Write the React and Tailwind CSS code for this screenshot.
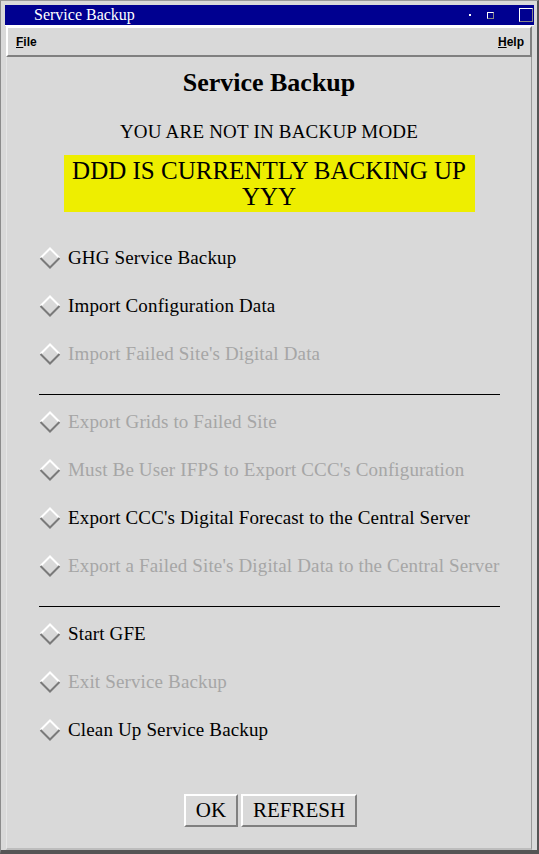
import React from "react";

function Diamond() {
  return (
    <svg width="22" height="22" viewBox="0 0 22 22" className="shrink-0">
      <polygon points="1,11 11,1 21,11 11,21" fill="#d9d9d9" />
      <polyline points="1.5,11 11,1.5 20.5,11" fill="none" stroke="#ffffff" strokeWidth="2" />
      <polyline points="1.5,11 11,20.5 20.5,11" fill="none" stroke="#7a7a7a" strokeWidth="2" />
    </svg>
  );
}

function Row({ label, disabled }) {
  return (
    <div className="h-[48px] flex items-center pl-[32px]">
      <Diamond />
      <span
        className={
          "ml-[7px] text-[19px] tracking-[0.15px] whitespace-nowrap font-['Liberation_Serif','Times_New_Roman',serif] " +
          (disabled ? "text-[#a6a6a6]" : "text-black")
        }
      >
        {label}
      </span>
    </div>
  );
}

function Sep() {
  return (
    <div className="h-[20px] pt-[16px] pl-[32px] pr-[31px]">
      <div className="h-px bg-black" />
    </div>
  );
}

export default function App() {
  return (
    <div className="w-[539px] h-[854px] box-border bg-[#d9d9d9] border-l border-t border-l-[#8c8c8c] border-t-[#9a9a9a] border-r-2 border-r-[#555] border-b-4 border-b-[#555] pt-[4px] pl-[4px] pr-[3px] flex flex-col font-['Liberation_Serif','Times_New_Roman',serif]">
      {/* title bar */}
      <div className="h-[21px] shrink-0 bg-[#000090] border-b border-b-white flex items-center relative">
        <span className="ml-[29px] text-white text-[16px] leading-none font-['Liberation_Serif','Times_New_Roman',serif]">Service Backup</span>
        <div className="absolute left-[464px] top-[9px] w-[2px] h-[2px] bg-white" />
        <div className="absolute left-[482px] top-[7px] w-[7px] h-[7px] border border-t-white border-l-white border-r-[#888] border-b-[#888]" />
        <div className="absolute left-[514px] top-[3px] w-[14px] h-[14px] border border-t-white border-l-white border-r-[#888] border-b-[#888]" />
      </div>
      {/* menu bar */}
      <div className="h-[31px] shrink-0 ml-[1px] mr-[2px] border-t-2 border-l-2 border-t-white border-l-white border-b-2 border-r-2 border-b-[#808080] border-r-[#808080] flex items-center justify-between pl-[8px] pr-[6px] text-[12px] font-bold text-black font-['Liberation_Sans',Arial,sans-serif]">
        <span><span className="underline">F</span>ile</span>
        <span><span className="underline">H</span>elp</span>
      </div>
      {/* body */}
      <div className="flex-1 flex flex-col ml-[1px] mr-[2px] border-l border-l-[#e6e6e6] border-r border-r-[#9a9a9a] border-b-2 border-b-[#bdbdbd]">
        <div className="h-[50px] flex items-center justify-center font-bold text-[26px] text-black font-['Liberation_Serif','Times_New_Roman',serif]">
          Service Backup
        </div>
        <div className="mt-[10px] h-[30px] flex items-center justify-center text-[19px] tracking-[0.2px] text-black font-['Liberation_Serif','Times_New_Roman',serif]">
          YOU ARE NOT IN BACKUP MODE
        </div>
        <div className="mt-[8px] self-center w-[411px] h-[57px] bg-[#eeee00] flex items-center justify-center px-[8px]">
          <p className="text-center text-[25px] leading-[26px] text-black font-['Liberation_Serif','Times_New_Roman',serif]">
            DDD IS CURRENTLY BACKING UP YYY
          </p>
        </div>
        <div className="mt-[22px] flex flex-col">
          <Row label="GHG Service Backup" />
          <Row label="Import Configuration Data" />
          <Row label="Import Failed Site's Digital Data" disabled />
          <Sep />
          <Row label="Export Grids to Failed Site" disabled />
          <Row label="Must Be User IFPS to Export CCC's Configuration" disabled />
          <Row label="Export CCC's Digital Forecast to the Central Server" />
          <Row label="Export a Failed Site's Digital Data to the Central Server" disabled />
          <Sep />
          <Row label="Start GFE" />
          <Row label="Exit Service Backup" disabled />
          <Row label="Clean Up Service Backup" />
        </div>
        <div className="mt-[40px] flex justify-center gap-[3px] pl-[3px]">
          <button className="w-[54px] h-[33px] bg-[#d9d9d9] border-t-2 border-l-2 border-t-white border-l-white border-b-2 border-r-2 border-b-[#808080] border-r-[#808080] text-[21px] text-black flex items-center justify-center font-['Liberation_Serif','Times_New_Roman',serif]">
            OK
          </button>
          <button className="w-[116px] h-[33px] bg-[#d9d9d9] border-t-2 border-l-2 border-t-white border-l-white border-b-2 border-r-2 border-b-[#808080] border-r-[#808080] text-[21px] text-black flex items-center justify-center font-['Liberation_Serif','Times_New_Roman',serif]">
            REFRESH
          </button>
        </div>
      </div>
    </div>
  );
}
